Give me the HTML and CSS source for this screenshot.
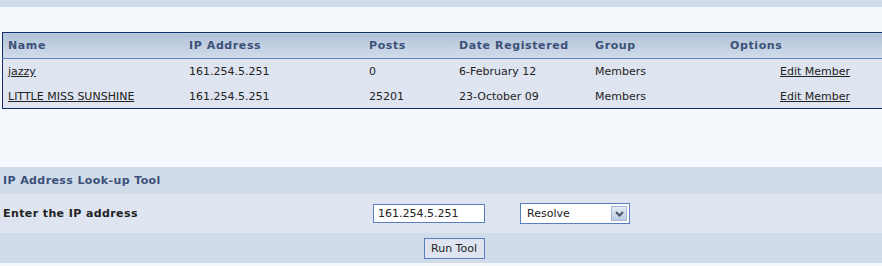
FILE: index.html
```html
<!DOCTYPE HTML>
<html lang="en">
  <head>
    <title>Member IP Search</title>
    <meta charset="utf-8">
    <link rel="stylesheet" href="styles.css">
  </head>
  <body>

  <div class="topbar"></div>

  <div class="tablewrap">
    <table class="members">
      <tr class="head">
        <th class="c-name">Name</th>
        <th class="c-ip">IP Address</th>
        <th class="c-posts">Posts</th>
        <th class="c-date">Date Registered</th>
        <th class="c-group">Group</th>
        <th class="c-opt">Options</th>
      </tr>
      <tr class="first">
        <td><a href="#">jazzy</a></td>
        <td>161.254.5.251</td>
        <td>0</td>
        <td>6-February 12</td>
        <td>Members</td>
        <td class="opt"><a href="#">Edit Member</a></td>
      </tr>
      <tr class="last">
        <td><a href="#">LITTLE MISS SUNSHINE</a></td>
        <td>161.254.5.251</td>
        <td>25201</td>
        <td>23-October 09</td>
        <td>Members</td>
        <td class="opt"><a href="#">Edit Member</a></td>
      </tr>
    </table>
  </div>

  <div class="tool">
    <div class="tool-title">IP Address Look-up Tool</div>
    <div class="tool-row">
      <label class="tool-label" for="ip">Enter the IP address</label>
      <input id="ip" class="ip" type="text" value="161.254.5.251">
      <span class="selectbox">
        <select class="resolve">
          <option>Resolve</option>
        </select>
        <span class="arrow">
          <svg width="9" height="6" viewBox="0 0 9 6"><path d="M1 1 L4.5 4.5 L8 1" fill="none" stroke="#4a5468" stroke-width="2"/></svg>
        </span>
      </span>
    </div>
    <div class="tool-foot">
      <button class="run" type="button">Run Tool</button>
    </div>
  </div>

  </body>
</html>
```

FILE: styles.css
```css
html {
  height: 100%;
}
body {
  margin: 0;
  padding: 0;
  background: #f5f8fd;
  color: #222222;
  font-family: "DejaVu Sans", Verdana, sans-serif;
  font-size: 11px;
  overflow: hidden;
}

a {
  color: #222222;
  text-decoration: underline;
}

.topbar {
  height: 7px;
  background-color: #d1dcea;
}

.tablewrap {
  margin: 25px 0 0 2px;
  width: 880px;
  overflow: hidden;
}

.members {
  width: 920px;
  border-collapse: collapse;
  border-top: 1px solid #0f2d66;
  border-left: 1px solid #0f2d66;
  border-bottom: 1px solid #0f2d66;
  background-color: #dfe5f0;
}

.members th {
  height: 25px;
  padding: 0 0 0 5px;
  text-align: left;
  font-weight: bold;
  color: #3b5179;
  letter-spacing: 0.6px;
  background: linear-gradient(#b2c2d8, #d1dcea);
  border-bottom: 1px solid #5b83c4;
}

.members td {
  height: 24px;
  padding: 0 0 0 5px;
  white-space: nowrap;
}
.members tr.first td {
  height: 25px;
}

.c-name { width: 176px; }
.c-ip { width: 175px; }
.c-posts { width: 85px; }
.c-date { width: 131px; }
.c-group { width: 130px; }

.members td.opt {
  padding-left: 55px;
}

.tool {
  margin-top: 58px;
}

.tool-title {
  height: 27px;
  line-height: 27px;
  padding-left: 3px;
  background-color: #d1dcea;
  color: #3b5179;
  font-weight: bold;
  letter-spacing: 0.4px;
}

.tool-row {
  height: 39px;
  display: flex;
  align-items: center;
  background-color: #dfe5f0;
}

.tool-label {
  width: 370px;
  padding-left: 3px;
  font-weight: bold;
  letter-spacing: 0.4px;
}

.ip {
  box-sizing: border-box;
  width: 112px;
  height: 19px;
  margin: 0 35px 0 0;
  padding: 0 4px;
  border: 1px solid #5a7ebf;
  background: #ffffff;
  font: 11px "DejaVu Sans", Verdana, sans-serif;
  color: #222222;
}

.selectbox {
  position: relative;
  display: inline-block;
}

.resolve {
  -webkit-appearance: none;
  appearance: none;
  box-sizing: border-box;
  width: 110px;
  height: 21px;
  margin: 0;
  padding: 0 6px;
  border: 1px solid #5a7ebf;
  border-radius: 0;
  background: #ffffff;
  font: 11px "DejaVu Sans", Verdana, sans-serif;
  color: #222222;
}

.arrow {
  position: absolute;
  top: 3px;
  right: 3px;
  box-sizing: border-box;
  width: 16px;
  height: 15px;
  border: 1px solid #a5b6cf;
  background: linear-gradient(#e4ebf4, #bccce2);
  display: flex;
  align-items: center;
  justify-content: center;
}

.tool-foot {
  height: 30px;
  display: flex;
  align-items: center;
  justify-content: center;
  background-color: #d1dcea;
}

.run {
  box-sizing: border-box;
  width: 61px;
  height: 21px;
  margin-left: 26px;
  padding: 0;
  border: 1px solid #5a7ebf;
  background: #dfe5f0;
  font: 11px "DejaVu Sans", Verdana, sans-serif;
  color: #222222;
}
```
